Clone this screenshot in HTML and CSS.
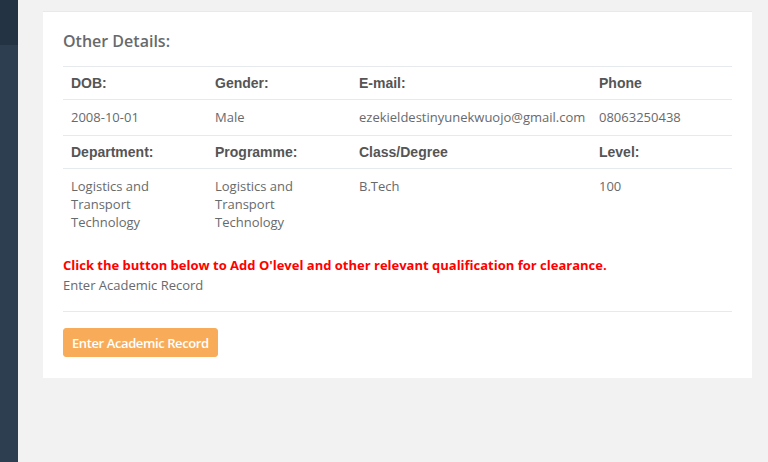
FILE: index.html
```html
<!DOCTYPE html>
<html>
<head>
<meta charset="utf-8">
<link rel="stylesheet" href="styles.css">
</head>
<body>
<div class="layout">
  <aside class="sidebar"><div class="sidebar-top"></div></aside>
  <main class="main">
    <section class="card">
      <h3 class="title">Other Details:</h3>
      <table class="details">
        <colgroup>
          <col class="c1"><col class="c2"><col class="c3"><col class="c4">
        </colgroup>
        <tr class="head"><th>DOB:</th><th>Gender:</th><th>E-mail:</th><th>Phone</th></tr>
        <tr><td>2008-10-01</td><td>Male</td><td>ezekieldestinyunekwuojo@gmail.com</td><td>08063250438</td></tr>
        <tr class="head"><th>Department:</th><th>Programme:</th><th>Class/Degree</th><th>Level:</th></tr>
        <tr><td>Logistics and Transport Technology</td><td>Logistics and Transport Technology</td><td>B.Tech</td><td>100</td></tr>
      </table>
      <p class="notice">Click the button below to Add O'level and other relevant qualification for clearance.</p>
      <p class="sub">Enter Academic Record</p>
      <hr class="divider">
      <button class="btn">Enter Academic Record</button>
    </section>
  </main>
</div>
</body>
</html>
```
FILE: styles.css
```css
* { box-sizing: border-box; }
html, body { margin: 0; padding: 0; height: 100%; }
body {
  background: #f2f2f2;
  font-family: "Open Sans", sans-serif;
  font-size: 13px;
  color: #676a6c;
}
.layout { display: flex; min-height: 462px; }
.sidebar { width: 18px; background: #2c3e50; flex-shrink: 0; }
.sidebar-top { height: 45px; background: #243344; }
.main { flex: 1; padding: 11px 16px 0 25px; }
.card {
  background: #fff;
  border-top: 1px solid #e7eaec;
  padding: 18px 20px 21px 20px;
}
.title {
  margin: 0 0 14px 0;
  font-size: 16px;
  font-weight: 600;
  color: #676a6c;
  line-height: 22px;
}
.details { width: 100%; border-collapse: collapse; table-layout: fixed; }
.c1 { width: 144px; } .c2 { width: 144px; } .c3 { width: 240px; }
.details th, .details td {
  text-align: left;
  vertical-align: top;
  padding: 8px;
  border-top: 1px solid #e7eaec;
  line-height: 18px;
}
.details th {
  font-family: "Liberation Sans", Arial, sans-serif;
  font-weight: bold;
  font-size: 14px;
  color: #555;
  padding: 7px 8px 7px 8px;
}
.details td { padding: 8px 8px 9px 8px; color: #676a6c; }
.notice {
  margin: 15px 0 0 0;
  color: #ff0000;
  font-weight: bold;
  font-size: 13px;
  line-height: 20px;
}
.sub { margin: 0; line-height: 20px; }
.divider { border: 0; border-top: 1px solid #e7eaec; margin: 16px 0 16px 0; }
.btn {
  font-family: "Open Sans", sans-serif;
  font-size: 13px;
  font-weight: 600;
  letter-spacing: -0.4px;
  color: #fff;
  background: #f8ac59;
  border: 1px solid #f8ac59;
  border-radius: 3px;
  height: 29px;
  padding: 0 8px;
}
```
